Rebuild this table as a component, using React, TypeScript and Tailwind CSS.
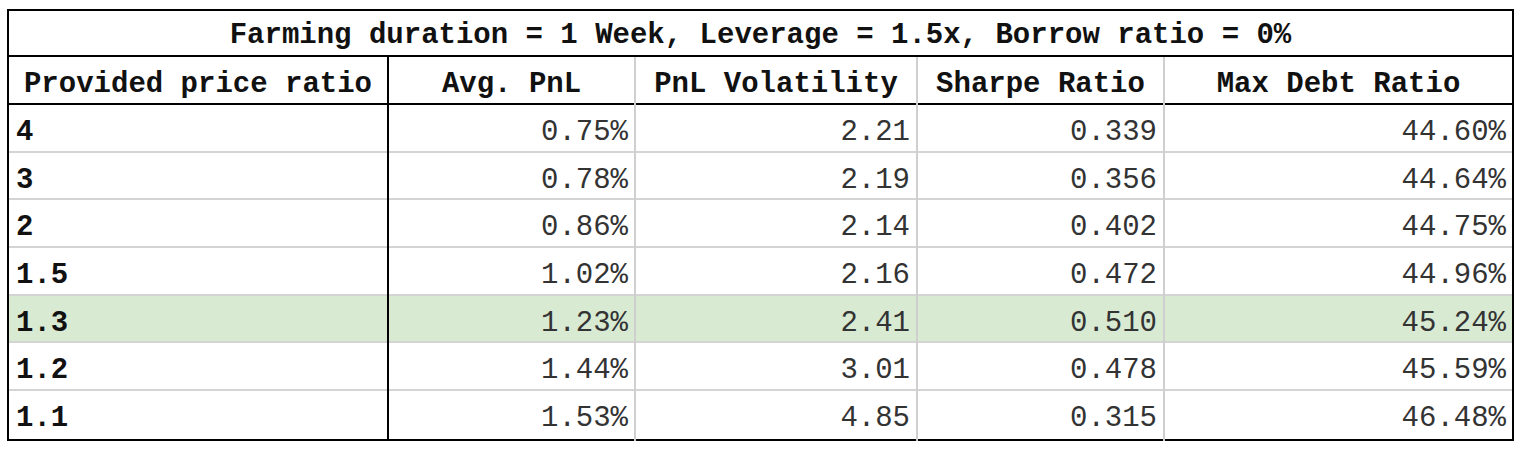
const rows = [
  { ratio: "4", pnl: "0.75%", vol: "2.21", sharpe: "0.339", debt: "44.60%" },
  { ratio: "3", pnl: "0.78%", vol: "2.19", sharpe: "0.356", debt: "44.64%" },
  { ratio: "2", pnl: "0.86%", vol: "2.14", sharpe: "0.402", debt: "44.75%" },
  { ratio: "1.5", pnl: "1.02%", vol: "2.16", sharpe: "0.472", debt: "44.96%" },
  { ratio: "1.3", pnl: "1.23%", vol: "2.41", sharpe: "0.510", debt: "45.24%", hl: true },
  { ratio: "1.2", pnl: "1.44%", vol: "3.01", sharpe: "0.478", debt: "45.59%" },
  { ratio: "1.1", pnl: "1.53%", vol: "4.85", sharpe: "0.315", debt: "46.48%" },
]

const headers = ["Provided price ratio", "Avg. PnL", "PnL Volatility", "Sharpe Ratio", "Max Debt Ratio"]

// numeric cells: right aligned, thin dark grey like the sheet export
const num = "flex items-center justify-end pt-[6px] pr-[6px] text-[#333]"

export default function App() {
  return (
    <div className="w-[1524px] h-[452px] bg-white pt-[9px] pl-[7px] font-['Liberation_Mono',monospace] text-[29px] text-[#111]">
      <div className="w-[1507px] border-2 border-black">
        <div className="h-[46px] pt-[6px] border-b-2 border-black flex items-center justify-center font-bold whitespace-pre">
          Farming duration = 1 Week, Leverage = 1.5x, Borrow ratio = 0%
        </div>
        <div className="grid grid-cols-[380px_247px_282px_247px_347px] h-[48px] border-b-2 border-black font-bold">
          {headers.map((h, i) => (
            <div
              key={h}
              className={`flex items-center justify-center pt-[6px] whitespace-pre ${i === 0 ? "border-r-2 border-black" : i < 4 ? "border-r-2 border-[#cfcfcf]" : ""}`}
            >
              {h}
            </div>
          ))}
        </div>
        {rows.map((r, idx) => (
          <div
            key={r.ratio}
            className={`grid grid-cols-[380px_247px_282px_247px_347px] h-[47.7px] ${idx < rows.length - 1 ? "border-b-2 border-[#d4d4d4]" : ""} ${r.hl ? "bg-[#d9ead3]" : ""}`}
          >
            <div className="flex items-center pt-[6px] pl-[7px] font-bold border-r-2 border-black">{r.ratio}</div>
            <div className={`${num} border-r-2 border-[#cfcfcf]`}>{r.pnl}</div>
            <div className={`${num} border-r-2 border-[#cfcfcf]`}>{r.vol}</div>
            <div className={`${num} border-r-2 border-[#cfcfcf]`}>{r.sharpe}</div>
            <div className={num}>{r.debt}</div>
          </div>
        ))}
      </div>
    </div>
  )
}
